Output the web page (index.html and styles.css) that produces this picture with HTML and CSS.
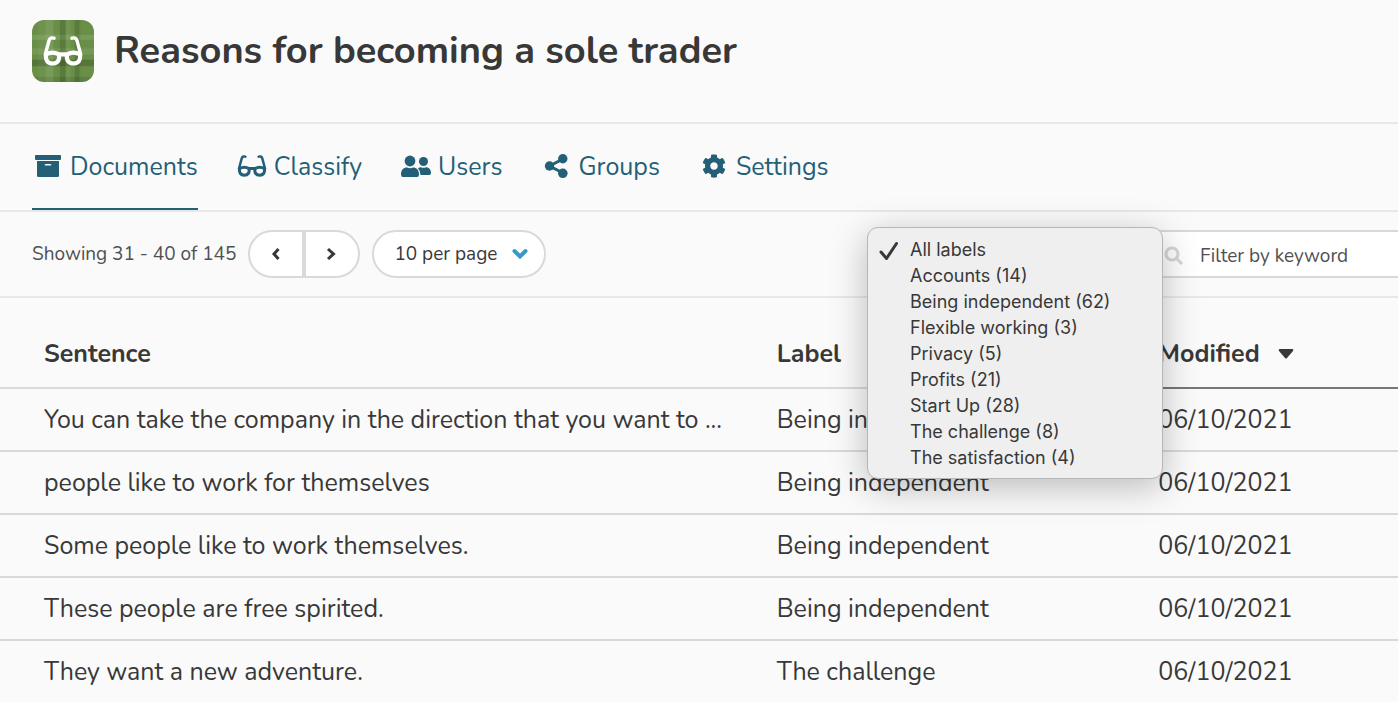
FILE: index.html
```html
<!DOCTYPE html>
<html lang="en">
<head>
  <meta charset="UTF-8">
  <meta name="viewport" content="width=device-width, initial-scale=1.0">
  <title>Reasons for becoming a sole trader</title>
  <link rel="stylesheet" href="styles.css">
</head>
<body>
  <!-- Shared glasses shape -->
  <svg class="sprite" aria-hidden="true">
    <symbol id="glasses" viewBox="0 0 40 30">
      <g fill="none" stroke="currentColor" stroke-linecap="round" stroke-linejoin="round">
        <path stroke-width="3.400" d="M11 2.200C8 1.400 6.600 2.300 5.900 5L2.400 18M29 2.200C32 1.400 33.400 2.300 34.100 5L37.600 18"/>
        <path stroke-width="4.200" d="M2.800 18.500C7 16.200 12 16.200 16 18.500C16.800 24.500 14.500 27.500 9.500 27.500C4.500 27.500 2.500 24.500 2.800 18.500ZM24 18.500C28 16.200 33 16.200 37.200 18.500C37.500 24.500 35.500 27.500 30.500 27.500C25.500 27.500 23.200 24.500 24 18.500ZM16 18.300H24"/>
      </g>
    </symbol>
  </svg>

  <header class="header">
    <div class="logo">
      <svg class="logo-icon" aria-hidden="true"><use href="#glasses"/></svg>
    </div>
    <h1 class="title">Reasons for becoming a sole trader</h1>
  </header>

  <nav class="tabs">
    <a class="tab tab-active" href="#documents">
      <svg class="tab-icon" viewBox="0 0 32 26" fill="currentColor" aria-hidden="true">
        <rect x="3" y="1" width="26" height="5" rx="1"/>
        <path fill-rule="evenodd" d="M5 7H27V21.500Q27 23 25.500 23H6.500Q5 23 5 21.500ZM13.500 10Q12.700 10 12.700 10.800T13.500 11.600H18.500Q19.300 11.600 19.300 10.800T18.500 10Z"/>
      </svg>
      Documents
    </a>
    <a class="tab" href="#classify">
      <svg class="tab-icon" viewBox="0 0 32 26" aria-hidden="true"><use href="#glasses" x="1" y="1" width="30" height="22"/></svg>
      Classify
    </a>
    <a class="tab" href="#users">
      <svg class="tab-icon" viewBox="0 1 32 26" fill="currentColor" aria-hidden="true">
        <circle cx="10" cy="8" r="5.400"/>
        <path d="M1 21.500C1 17 3.500 14.600 7 14.600Q10 15.800 13 14.600C16.500 14.600 19 17 19 21.500Q19 24 17 24H3Q1 24 1 21.500Z"/>
        <circle cx="23.500" cy="8.500" r="4.500"/>
        <path d="M18 15.300Q19.300 14.200 21 14.200Q23.500 15.200 26 14.200C29 14.200 31 16.500 31 20Q31 22 29.300 22H20.500Q20.500 18 18 15.300Z"/>
      </svg>
      Users
    </a>
    <a class="tab" href="#groups">
      <svg class="tab-icon" viewBox="0 1 32 26" fill="currentColor" aria-hidden="true">
        <path fill="none" stroke="currentColor" stroke-width="3" d="M23 6L9.500 13L23 20"/>
        <circle cx="9.500" cy="13" r="4.700"/>
        <circle cx="22.800" cy="5.800" r="4.700"/>
        <circle cx="22.800" cy="20.300" r="4.800"/>
      </svg>
      Groups
    </a>
    <a class="tab" href="#settings">
      <svg class="tab-icon" viewBox="-85 0 682 554" fill="currentColor" aria-hidden="true">
        <path d="M487.400 315.700l-42.600-24.600c4.300-23.200 4.300-47 0-70.200l42.600-24.600c4.900-2.800 7.100-8.600 5.500-14-11.100-35.600-30-67.800-54.700-94.600-3.800-4.100-10-5.100-14.800-2.300L380.800 110c-17.900-15.400-38.500-27.300-60.800-35.100V25.800c0-5.600-3.900-10.500-9.400-11.700-36.700-8.200-74.300-7.800-109.200 0-5.500 1.200-9.400 6.100-9.400 11.700V75c-22.200 7.900-42.800 19.800-60.800 35.100L88.700 85.500c-4.900-2.800-11-1.900-14.800 2.300-24.700 26.700-43.600 58.900-54.700 94.600-1.700 5.400.6 11.200 5.500 14L67.300 221c-4.300 23.200-4.300 47 0 70.200l-42.600 24.600c-4.900 2.800-7.100 8.600-5.500 14 11.100 35.600 30 67.800 54.700 94.600 3.800 4.100 10 5.100 14.800 2.300l42.600-24.600c17.900 15.400 38.500 27.300 60.800 35.100v49.200c0 5.600 3.900 10.500 9.400 11.700 36.700 8.200 74.300 7.800 109.200 0 5.500-1.200 9.400-6.100 9.400-11.700v-49.200c22.200-7.900 42.800-19.800 60.800-35.100l42.600 24.600c4.900 2.800 11 1.900 14.800-2.300 24.700-26.700 43.600-58.900 54.700-94.600 1.500-5.500-.7-11.300-5.600-14.100zM256 336c-44.100 0-80-35.900-80-80s35.900-80 80-80 80 35.900 80 80-35.900 80-80 80z"/>
      </svg>
      Settings
    </a>
  </nav>

  <div class="toolbar">
    <span class="count">Showing 31 - 40 of 145</span>
    <div class="pager">
      <button class="pager-btn" type="button" aria-label="Previous page">
        <svg class="arrow" viewBox="0 0 12 14"><path d="M8.500 2L4 7L8.500 12"/></svg>
      </button>
      <button class="pager-btn" type="button" aria-label="Next page">
        <svg class="arrow" viewBox="0 0 12 14"><path d="M2 2L7.500 7L2 12"/></svg>
      </button>
    </div>
    <div class="per-page">
      <select class="select" aria-label="Rows per page">
        <option>10 per page</option>
        <option>25 per page</option>
        <option>50 per page</option>
      </select>
      <svg class="chevron" viewBox="0 0 16 12" aria-hidden="true"><path d="M2.500 3L8 8.500L13.500 3"/></svg>
    </div>

    <div class="label-filter">
      <button class="label-btn" type="button" aria-haspopup="listbox" aria-expanded="true" aria-label="Filter by label"></button>
      <ul class="menu" role="listbox" aria-label="Labels">
        <li class="menu-item" role="option" aria-selected="true">
          <svg class="check" viewBox="0 0 20 20" aria-hidden="true"><path d="M2 11L7.500 17.500L17.500 2.500"/></svg>
          All labels
        </li>
        <li class="menu-item" role="option">Accounts (14)</li>
        <li class="menu-item" role="option">Being independent (62)</li>
        <li class="menu-item" role="option">Flexible working (3)</li>
        <li class="menu-item" role="option">Privacy (5)</li>
        <li class="menu-item" role="option">Profits (21)</li>
        <li class="menu-item" role="option">Start Up (28)</li>
        <li class="menu-item" role="option">The challenge (8)</li>
        <li class="menu-item" role="option">The satisfaction (4)</li>
      </ul>
    </div>

    <label class="search">
      <svg class="search-icon" viewBox="0 0 20 20" aria-hidden="true"><circle cx="8" cy="8" r="6"/><path d="M12.500 12.500L18 18"/></svg>
      <input class="search-input" type="text" placeholder="Filter by keyword" aria-label="Filter by keyword">
    </label>
  </div>

  <table class="table">
    <thead>
      <tr>
        <th class="col-sentence">Sentence</th>
        <th class="col-label">Label</th>
        <th class="col-modified sorted">Modified <svg class="caret" viewBox="0 0 16 10" aria-hidden="true"><path d="M1.500 0H14.500Q16 .5 15 2L9 9Q8 10 7 9L1 2Q0 .5 1.500 0Z"/></svg></th>
      </tr>
    </thead>
    <tbody>
      <tr>
        <td>You can take the company in the direction that you want to ...</td>
        <td>Being independent</td>
        <td>06/10/2021</td>
      </tr>
      <tr>
        <td>people like to work for themselves</td>
        <td>Being independent</td>
        <td>06/10/2021</td>
      </tr>
      <tr>
        <td>Some people like to work themselves.</td>
        <td>Being independent</td>
        <td>06/10/2021</td>
      </tr>
      <tr>
        <td>These people are free spirited.</td>
        <td>Being independent</td>
        <td>06/10/2021</td>
      </tr>
      <tr>
        <td>They want a new adventure.</td>
        <td>The challenge</td>
        <td>06/10/2021</td>
      </tr>
    </tbody>
  </table>
</body>
</html>
```
FILE: styles.css
```css
:root {
  --teal: #235f76;
  --text: #383838;
  --line: #d9d9d9;
  --line-light: #e8e8e8;
}

* {
  box-sizing: border-box;
}

body {
  margin: 0;
  background: #fafafa;
  color: var(--text);
  font-family: Nunito, Lato, sans-serif;
  font-size: 25px;
  overflow: hidden;
}

button,
input,
select {
  font: inherit;
  color: inherit;
}

.sprite {
  display: none;
}

.header {
  display: flex;
  align-items: center;
  gap: 20px;
  padding: 20px 32px 40px;
  border-bottom: 2px solid var(--line-light);
}

.logo {
  display: flex;
  align-items: center;
  justify-content: center;
  width: 62px;
  height: 62px;
  border-radius: 12px;
  background:
    linear-gradient(90deg, transparent 8%, rgba(255, 255, 255, .04) 12% 20%, rgba(255, 255, 255, .1) 24% 33%, transparent 36% 44%, rgba(0, 0, 0, .14) 46% 53%, rgba(255, 255, 255, .06) 56% 60%, transparent 64% 68%, rgba(0, 0, 0, .14) 70% 75%, transparent 79%),
    linear-gradient(180deg, transparent 23%, rgba(255, 255, 255, .1) 25% 31%, transparent 33% 44%, rgba(255, 255, 255, .08) 47% 54%, transparent 57% 63%, rgba(0, 0, 0, .18) 65% 73%, transparent 76% 91%, rgba(0, 0, 0, .1) 93%),
    #698f47;
}

.logo-icon {
  width: 40px;
  height: 30px;
  color: #fff;
}

.title {
  margin: 0;
  font-size: 38px;
  line-height: 60px;
  font-weight: 700;
}

.tabs {
  display: flex;
  gap: 38px;
  padding: 0 32px;
  border-bottom: 2px solid var(--line-light);
}

.tab {
  display: flex;
  align-items: center;
  gap: 6px;
  height: 86px;
  padding-top: 2px;
  border-bottom: 2px solid transparent;
  color: var(--teal);
  text-decoration: none;
}

.tab-active {
  border-color: var(--teal);
}

.tab-icon {
  width: 32px;
  height: 26px;
}

.toolbar {
  display: flex;
  align-items: center;
  height: 86px;
  padding-left: 32px;
  border-bottom: 2px solid var(--line-light);
  font-size: 19px;
}

.count {
  color: #505050;
}

.pager {
  display: flex;
  margin: 0 12px;
}

.pager-btn {
  display: flex;
  align-items: center;
  justify-content: center;
  width: 56px;
  height: 48px;
  padding: 0;
  border: 2px solid var(--line);
  border-radius: 24px 0 0 24px;
  background: #fff;
}

.pager-btn:last-child {
  border-radius: 0 24px 24px 0;
}

.arrow,
.chevron,
.check,
.search-icon {
  fill: none;
  stroke: currentColor;
}

.arrow {
  width: 12px;
  height: 14px;
  stroke-width: 3;
}

.per-page {
  position: relative;
}

.select {
  appearance: none;
  width: 174px;
  height: 48px;
  padding: 0 20px;
  border: 2px solid var(--line);
  border-radius: 24px;
  background: #fff;
}

.chevron {
  position: absolute;
  top: 18px;
  right: 18px;
  width: 16px;
  height: 12px;
  color: #3799c4;
  stroke-width: 4;
  stroke-linecap: round;
  pointer-events: none;
}

.label-filter {
  position: relative;
  width: 270px;
  margin-left: auto;
}

.label-btn {
  display: block;
  width: 100%;
  height: 48px;
  border: 2px solid var(--line);
  border-radius: 24px 0 0 24px;
  background: #fff;
}

.menu {
  position: absolute;
  top: -3px;
  left: -11px;
  width: 296px;
  margin: 0;
  padding: 9px 0 7px;
  border: 1px solid #b4b6b8;
  border-radius: 11px;
  background: #efefef;
  box-shadow: 0 8px 36px rgba(0, 0, 0, .26);
  list-style: none;
  font-family: Inter, sans-serif;
  font-size: 18px;
  font-weight: 400;
  line-height: 26px;
}

.menu-item {
  position: relative;
  padding-left: 42px;
}

.check {
  position: absolute;
  top: 4px;
  left: 11px;
  width: 20px;
  height: 20px;
  stroke-width: 3;
  stroke-linecap: round;
  stroke-linejoin: round;
}

.search {
  display: flex;
  align-items: center;
  gap: 16px;
  width: 18.3%;
  height: 48px;
  padding: 3px 0 0 14px;
  border: 2px solid var(--line);
  border-right: 0;
  background: #fff;
}

.search-icon {
  flex: none;
  width: 20px;
  height: 20px;
  color: #d6d6d6;
  stroke-width: 3;
}

.search-input {
  width: 100%;
  min-width: 0;
  padding: 0;
  border: 0;
  outline: 0;
  background: transparent;
}

.search-input::placeholder {
  color: #505050;
}

.table {
  width: 100%;
  border-collapse: separate;
  border-spacing: 0;
  table-layout: fixed;
}

.table th,
.table td {
  height: 63px;
  padding: 0 12px;
  border-bottom: 2px solid var(--line);
  text-align: left;
  white-space: nowrap;
}

.table th {
  height: 91px;
  padding-top: 22px;
}

.table th:first-child,
.table td:first-child {
  padding-left: 44px;
}

.col-sentence {
  width: 54.7%;
}

.col-label {
  width: 27.3%;
}

.col-modified {
  width: 18%;
}

.table .sorted {
  border-color: #777;
}

.caret {
  width: 16px;
  height: 10px;
  margin-left: 12px;
  fill: currentColor;
  vertical-align: 3px;
}
```
